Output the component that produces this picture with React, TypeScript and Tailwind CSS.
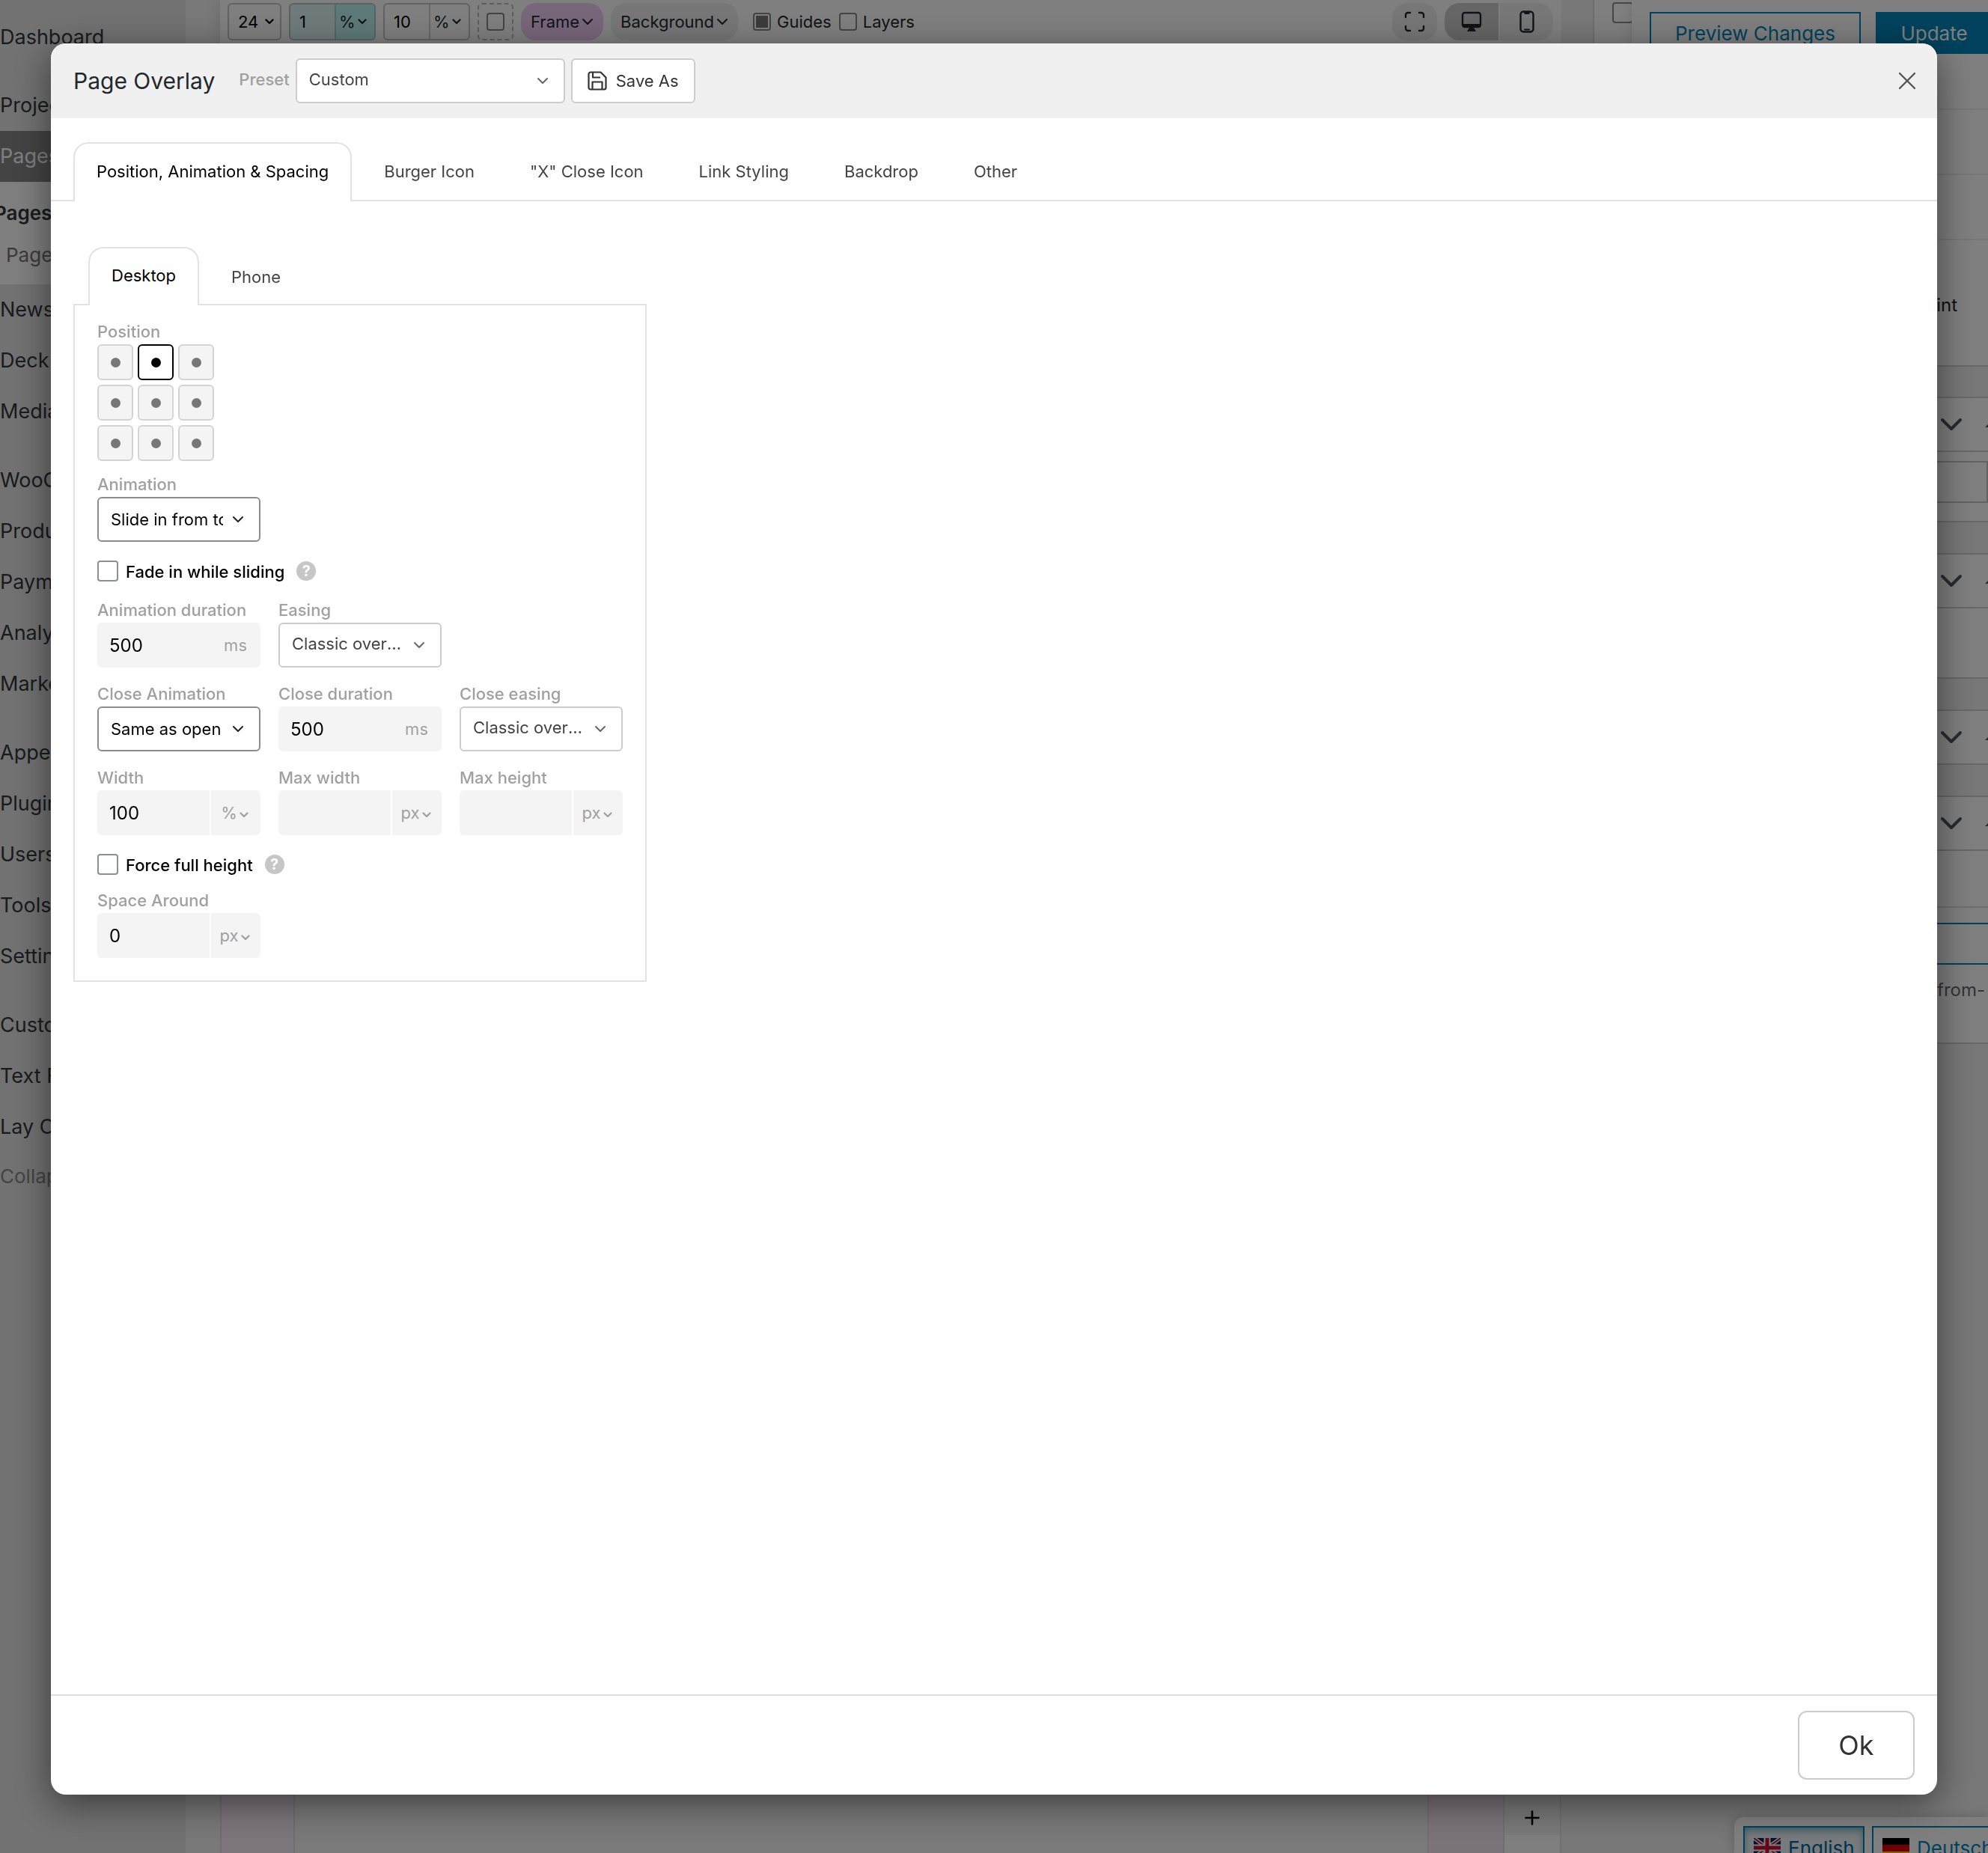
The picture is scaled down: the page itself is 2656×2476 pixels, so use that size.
import { useState } from 'react';

const menuGroups = [
  ['News', 'Deck', 'Media'],
  ['WooCommerce', 'Products', 'Payments', 'Analytics', 'Marketing'],
  ['Appearance', 'Plugins', 'Users', 'Tools', 'Settings'],
  ['Customize', 'Text Formats', 'Lay Options'],
];

const tabs = ['Position, Animation & Spacing', 'Burger Icon', '"X" Close Icon', 'Link Styling', 'Backdrop', 'Other'];

const positions = [
  'Top left', 'Top center', 'Top right',
  'Center left', 'Center', 'Center right',
  'Bottom left', 'Bottom center', 'Bottom right',
];

const Chevron = ({ className = '', stroke = 2 }: { className?: string; stroke?: number }) => (
  <svg viewBox="0 0 16 10" fill="none" stroke="currentColor" strokeWidth={stroke} strokeLinecap="round" strokeLinejoin="round" className={`shrink-0 pointer-events-none ${className}`}>
    <path d="M2 2l6 6 6-6" />
  </svg>
);

const Sidebar = () => (
  <aside className="w-[248px] shrink-0 overflow-hidden bg-[#e4e4e4] pt-4 text-[27px] text-[#32373c]">
    <nav className="flex flex-col gap-6">
      <a href="#dashboard" className="flex h-[68px] items-center">Dashboard</a>
      <div>
        <a href="#projects" className="flex h-[67px] items-center">Projects</a>
        <a href="#pages" className="flex h-[68px] items-center bg-[#888888] text-white">Pages</a>
        <div className="bg-white pt-[13px] pb-3 text-[26px]">
          <a href="#all-pages" className="-ml-2 flex h-14 items-center font-semibold">Pages</a>
          <a href="#page" className="flex h-14 items-center pl-2 text-[#777777]">Page</a>
        </div>
        {menuGroups[0].map((item) => (
          <a key={item} href="#menu" className="flex h-[68px] items-center">{item}</a>
        ))}
      </div>
      {menuGroups.slice(1).map((group) => (
        <div key={group[0]}>
          {group.map((item) => (
            <a key={item} href="#menu" className="flex h-[68px] items-center whitespace-nowrap">{item}</a>
          ))}
          {group[0] === 'Customize' && (
            <button type="button" className="flex h-[62px] items-center text-[26px] text-[#888888]">Collapse menu</button>
          )}
        </div>
      ))}
    </nav>
  </aside>
);

const Toolbar = () => (
  <div className="flex h-[62px] items-start gap-[10px] bg-white pt-1 pr-[11px] pl-[10px] text-[22px] text-[#23282d] shadow-[0_0_20px_rgba(0,0,0,0.12)]">
    <button type="button" className="flex h-[50px] w-[72px] items-center justify-between rounded-md border-2 border-[#c4c4c4] pr-2 pl-3 text-black">
      24 <Chevron className="w-[12px]" stroke={3} />
    </button>
    <div className="flex h-[50px] w-[116px] overflow-hidden rounded-md border-2 border-[#b4c4c4] bg-[#dff7f7]">
      <input aria-label="Columns gutter" defaultValue="1" className="w-[59px] pl-3 text-black" />
      <button type="button" className="flex flex-1 items-center justify-between border-l-2 border-[#a8cccc] bg-[#bdf3f2] pr-[10px] pl-1">
        % <Chevron className="w-[12px]" stroke={3} />
      </button>
    </div>
    <div className="flex h-[50px] w-[116px] overflow-hidden rounded-md border-2 border-[#c4c4c4]">
      <input aria-label="Row gutter" defaultValue="10" className="w-[59px] pl-3 text-black" />
      <button type="button" className="flex flex-1 items-center justify-between border-l-2 border-[#d0d0d0] pr-[10px] pl-1">
        % <Chevron className="w-[12px]" stroke={3} />
      </button>
    </div>
    <button type="button" aria-label="Outline" className="flex h-[50px] w-12 items-center justify-center rounded-md border-2 border-dashed border-[#bbbbbb]">
      <span className="size-6 rounded border-2 border-[#888888]" />
    </button>
    <button type="button" className="flex h-[50px] items-center gap-[3px] rounded-[20px] bg-[#f0ccf5] px-[13px]">
      Frame <Chevron className="w-4" />
    </button>
    <button type="button" className="flex h-[50px] items-center gap-[3px] rounded-[20px] bg-[#eeeeee] px-[13px]">
      Background <Chevron className="w-4" />
    </button>
    <label className="ml-[10px] flex h-[50px] items-center gap-2">
      <input type="checkbox" defaultChecked className="size-6 appearance-none rounded border-2 border-[#888888] bg-white p-[2px] before:block before:size-full before:bg-[#777777] before:content-['']" />
      Guides
    </label>
    <label className="flex h-[50px] items-center gap-2">
      <input type="checkbox" className="size-6 appearance-none rounded border-2 border-[#888888] bg-white" />
      Layers
    </label>
    <button type="button" aria-label="Fullscreen" className="ml-auto flex h-[50px] w-[60px] items-center justify-center rounded-[20px] bg-[#eeeeee]">
      <svg viewBox="0 0 28 28" fill="none" stroke="currentColor" strokeWidth="2.4" strokeLinecap="round" className="w-7">
        <path d="M2 8V5a3 3 0 0 1 3-3h3M20 2h3a3 3 0 0 1 3 3v3M26 20v3a3 3 0 0 1-3 3h-3M8 26H5a3 3 0 0 1-3-3v-3" />
      </svg>
    </button>
    <div className="flex h-[50px] gap-[2px] overflow-hidden rounded-[20px]">
      <button type="button" aria-label="Desktop view" className="flex w-[72px] items-center justify-center bg-[#cccccc]">
        <svg viewBox="0 0 28 28" className="w-7">
          <rect x="2" y="2" width="24" height="19" rx="3" fill="none" stroke="currentColor" strokeWidth="2.4" />
          <path d="M2 17h24v2a3 3 0 0 1-3 3h-6l3 5H8l3-5H5a3 3 0 0 1-3-3z" fill="currentColor" />
        </svg>
      </button>
      <button type="button" aria-label="Phone view" className="flex w-[71px] items-center justify-center bg-[#eeeeee]">
        <svg viewBox="0 0 20 30" className="w-5">
          <rect x="1.5" y="1.5" width="17" height="27" rx="4" fill="none" stroke="currentColor" strokeWidth="2.4" />
          <path d="M6 2h8v1a2 2 0 0 1-2 2H8a2 2 0 0 1-2-2z" fill="currentColor" />
          <path d="M7 25.5h6" stroke="currentColor" strokeWidth="2" strokeLinecap="round" />
        </svg>
      </button>
    </div>
  </div>
);

const Canvas = () => (
  <main className="flex min-w-0 flex-1 flex-col bg-[#f2f2f2] pl-[46px]">
    <Toolbar />
    <div className="flex flex-1 bg-[#f4f4f4]">
      <div className="w-[100px] border-x-2 border-[#e8d8e8] bg-[#fdecfa]" />
      <div className="flex-1" />
      <div className="w-[101px] border-l-2 border-[#f0d8f0] bg-[#f8e8f6]" />
      <div className="flex w-[78px] flex-col justify-end border-x-2 border-[#e0e0e0]">
        <button type="button" aria-label="Add row" className="flex h-[46px] items-center justify-center text-black">
          <svg viewBox="0 0 20 20" stroke="currentColor" strokeWidth="2.6" strokeLinecap="round" className="w-5">
            <path d="M10 1.500v17M1.500 10h17" />
          </svg>
        </button>
        <div className="h-6 bg-white" />
      </div>
    </div>
  </main>
);

const BoxHeader = () => (
  <div className="flex h-[74px] items-center justify-end gap-[29px] border-y-2 border-[#ccd0d4] bg-white text-[#50575e]">
    <Chevron className="w-[32px]" />
    <svg viewBox="0 0 20 12" className="-mr-4 w-5" fill="currentColor"><path d="M0 10 10 0l10 10z" /></svg>
  </div>
);

const Inspector = () => (
  <aside className="flex w-[570px] shrink-0 flex-col overflow-hidden bg-[#f0f0f0] text-[26px]">
    <div className="flex h-[96px] shrink-0 pl-[42px]">
      <div className="flex-1 overflow-hidden border-l-2 border-[#dcdcdc] bg-white pt-[2px] pl-6">
        <input type="checkbox" aria-label="Show grid" className="size-7 appearance-none rounded border-2 border-[#8c8f94]" />
      </div>
      <div className="flex w-[476px] shrink-0 gap-5 bg-white pt-4 pl-6 shadow-[0_4px_16px_rgba(0,0,0,0.15)]">
        <button type="button" className="h-14 w-[282px] shrink-0 border-2 border-[#0085ba] whitespace-nowrap text-[#0085ba]">Preview Changes</button>
        <button type="button" className="h-14 w-[160px] shrink-0 bg-[#0085ba] pr-1 text-white">Update</button>
      </div>
    </div>
    <div className="ml-[42px] flex h-[394px] shrink-0 flex-col border-b-2 border-[#ccd0d4] bg-white">
      <div className="h-[51px] border-b-2 border-[#eeeeee]" />
      <div className="h-[87px] border-b-2 border-[#eeeeee]" />
      <div className="h-[87px] border-b-2 border-[#eeeeee]" />
      <p className="flex flex-1 items-center justify-end pt-[6px] pr-[41px] text-[24px] text-[#1d2327]">Breakpoint</p>
    </div>
    <section className="mt-[40px] ml-[42px] shrink-0">
      <BoxHeader />
      <div className="h-[94px] border-b-2 border-[#ccd0d4] bg-white pt-3">
        <div className="h-14 border-2 border-[#c3c4c7]" />
      </div>
    </section>
    <section className="mt-[41px] ml-[42px] shrink-0">
      <BoxHeader />
      <div className="h-[94px] border-b-2 border-[#ccd0d4] bg-white" />
    </section>
    <section className="mt-[41px] ml-[42px] shrink-0">
      <BoxHeader />
    </section>
    <section className="mt-[41px] ml-[42px] shrink-0">
      <BoxHeader />
      <div className="border-b-2 border-[#ccd0d4] bg-white">
        <div className="h-[76px] border-b-2 border-[#dddddd]" />
        <input aria-label="Slug" className="mt-5 block h-14 w-full border-2 border-r-0 border-[#0085ba] bg-white" />
        <p className="flex h-[104px] items-start justify-end pt-4 pr-1 text-[24px] text-[#646970]">from-</p>
      </div>
    </section>
    <div className="mt-auto flex h-12 shrink-0 gap-[10px] self-end overflow-hidden rounded-tl-xl bg-white pt-3 pl-3 text-[#0085ba] shadow-[0_0_16px_rgba(0,0,0,0.2)]">
      <button type="button" className="flex h-[58px] w-[162px] shrink-0 items-center gap-[10px] border-2 border-[#0085ba] bg-[#eef6fa] pl-3 text-[#006799] shadow-[inset_0_4px_10px_#7fb8cc]">
        <svg viewBox="0 0 36 26" className="w-9">
          <path fill="#012169" d="M0 0h36v26H0z" />
          <path stroke="#fff" strokeWidth="5" d="M0 0l36 26M36 0L0 26" />
          <path stroke="#c8102e" strokeWidth="2" d="M0 0l36 26M36 0L0 26" />
          <path stroke="#fff" strokeWidth="9" d="M18 0v26M0 13h36" />
          <path stroke="#c8102e" strokeWidth="5" d="M18 0v26M0 13h36" />
        </svg>
        English
      </button>
      <button type="button" className="-mr-4 flex h-[58px] w-[171px] shrink-0 items-center gap-[10px] border-2 border-[#0085ba] bg-white pl-3">
        <svg viewBox="0 0 36 26" className="w-9">
          <path fill="#000" d="M0 0h36v9H0z" />
          <path fill="#d00" d="M0 9h36v9H0z" />
          <path fill="#ffce00" d="M0 18h36v8H0z" />
        </svg>
        Deutsch
      </button>
    </div>
  </aside>
);

const Field = ({ id, label, children }: { id: string; label: string; children: React.ReactNode }) => (
  <div className="w-[218px]">
    <label htmlFor={id} className="block leading-[34px] font-medium whitespace-nowrap text-[#a0a0a0]">{label}</label>
    {children}
  </div>
);

const Select = ({ id, value, strong = false }: { id: string; value: string; strong?: boolean }) => (
  <div className="relative">
    <select
      id={id}
      defaultValue={value}
      className={`block h-[60px] w-full appearance-none overflow-hidden rounded-md border-2 bg-white pr-12 pl-4
        ${strong ? 'border-[#8c8c8c] text-black' : 'border-[#cccccc] pb-[3px] text-[#444444] text-ellipsis'}`}
    >
      <option>{value}</option>
    </select>
    <Chevron className={`absolute top-[25px] right-[22px] w-4 ${strong ? 'text-[#222222]' : 'text-[#666666]'}`} />
  </div>
);

const DurationInput = ({ id }: { id: string }) => (
  <div className="flex h-[60px] items-center rounded-md bg-[#f4f4f4] pt-px pr-[18px] pl-4">
    <input id={id} defaultValue="500" className="w-full min-w-0 text-[24px] text-black" />
    <span className="text-[#a0a0a0]">ms</span>
  </div>
);

const UnitInput = ({ id, value, unit }: { id: string; value: string; unit: string }) => (
  <div className="flex h-[60px] gap-[2px] overflow-hidden rounded-md text-[#a0a0a0]">
    <input id={id} defaultValue={value} className="w-[150px] bg-[#f4f4f4] pt-px pl-4 text-[24px] text-black" />
    <button type="button" className="flex flex-1 items-center justify-center gap-[3px] bg-[#f4f4f4] pt-px pr-[3px]">
      {unit} <Chevron className="mt-1 w-3" stroke={3} />
    </button>
  </div>
);

const CheckRow = ({ label }: { label: string }) => (
  <div className="flex h-7 items-center">
    <label className="flex items-center gap-[10px] font-medium text-black">
      <input type="checkbox" className="size-7 appearance-none rounded border-2 border-[#8c8f94] bg-white" />
      <span className="pt-[2px]">{label}</span>
    </label>
    <button type="button" aria-label="Help" className="ml-4 flex size-[26px] items-center justify-center rounded-full bg-[#c6c6c6] text-[20px] font-bold text-white">?</button>
  </div>
);

const App = () => {
  const [tab, setTab] = useState(tabs[0]);
  const [device, setDevice] = useState('Desktop');
  const [position, setPosition] = useState('Top center');

  return (
    <div className="relative h-screen overflow-hidden font-[Inter,sans-serif] text-[22px]">
      <div className="flex h-full">
        <Sidebar />
        <Canvas />
        <Inspector />
      </div>

      <div className="fixed inset-0 flex bg-black/50 px-[68px] pt-[58px] pb-[78px]">
        <div role="dialog" aria-label="Page Overlay" className="flex flex-1 flex-col overflow-hidden rounded-[20px] bg-white shadow-[0_12px_50px_rgba(0,0,0,0.5)]">
          {/* Header */}
          <header className="flex h-[100px] shrink-0 items-center bg-[#f0f0f0] pr-[29px] pl-[30px]">
            <h1 className="text-[30px] text-[#23282d]">Page Overlay</h1>
            <label htmlFor="preset" className="mr-2 ml-8 pb-1 font-medium text-[#a0a0a0]">Preset</label>
            <div className="w-[360px]">
              <Select id="preset" value="Custom" />
            </div>
            <button type="button" className="ml-2 flex h-[60px] items-center gap-3 rounded-md border-2 border-[#cccccc] bg-white px-5 text-[#333333]">
              <svg viewBox="0 0 26 26" fill="none" stroke="currentColor" strokeWidth="2.2" strokeLinejoin="round" className="w-[26px]">
                <path d="M4 1.500h13.500l7 7V22a2.500 2.500 0 0 1-2.500 2.500H4A2.500 2.500 0 0 1 1.500 22V4A2.500 2.500 0 0 1 4 1.500z" />
                <path d="M7 1.500v7h10M6.500 24.500V14.500h13v10" />
              </svg>
              Save As
            </button>
            <button type="button" aria-label="Close" className="ml-auto text-[#555555]">
              <svg viewBox="0 0 22 22" stroke="currentColor" strokeWidth="2.4" strokeLinecap="round" className="w-[22px]">
                <path d="M1 1l20 20M21 1L1 21" />
              </svg>
            </button>
          </header>

          {/* Tabs */}
          <div role="tablist" className="mt-8 flex h-[79px] shrink-0 gap-3 border-b-2 border-[#e2e2e2] px-[30px]">
            {tabs.map((name) => (
              <button
                key={name}
                type="button"
                role="tab"
                aria-selected={tab === name}
                onClick={() => setTab(name)}
                className={`-mb-[2px] rounded-t-[20px] border-2 border-b-0 px-[29px] pb-[3px] ${tab === name ? 'border-[#e2e2e2] bg-white text-black' : 'border-transparent text-[#444444]'}`}
              >
                {name}
              </button>
            ))}
          </div>

          {/* Settings */}
          <div className="flex-1 px-[30px] pt-[61px]">
            <div role="tablist" className="flex h-[76px] gap-3 pl-5">
              {['Desktop', 'Phone'].map((name) => (
                <button
                  key={name}
                  type="button"
                  role="tab"
                  aria-selected={device === name}
                  onClick={() => setDevice(name)}
                  className={`relative -mb-[2px] rounded-t-[20px] border-2 border-b-0 px-[29px] ${device === name ? 'border-[#e2e2e2] bg-white pb-[3px] text-black' : 'border-transparent text-[#444444]'}`}
                >
                  {name}
                </button>
              ))}
            </div>
            <div className="w-fit border-2 border-[#e2e2e2] px-[30px] pt-[18px] pb-[30px]">
              <fieldset>
                <legend className="leading-[34px] font-medium text-[#a0a0a0]">Position</legend>
                <div className="grid w-fit grid-cols-3 gap-[6px]">
                  {positions.map((name) => (
                    <button
                      key={name}
                      type="button"
                      aria-label={name}
                      onClick={() => setPosition(name)}
                      className={`flex size-12 items-center justify-center rounded-md border-2 ${position === name ? 'border-black bg-white text-black' : 'border-[#d4d4d4] bg-[#f4f4f4] text-[#777777]'}`}
                    >
                      <span className="size-[13px] rounded-full bg-current" />
                    </button>
                  ))}
                </div>
              </fieldset>
              <div className="mt-[14px] mb-[25px]">
                <Field id="animation" label="Animation"><Select id="animation" value="Slide in from top" strong /></Field>
              </div>
              <CheckRow label="Fade in while sliding" />
              <div className="mt-[21px] mb-[25px] grid grid-cols-3 gap-x-6 gap-y-[18px]">
                <Field id="duration" label="Animation duration"><DurationInput id="duration" /></Field>
                <Field id="easing" label="Easing"><Select id="easing" value="Classic overshoot" /></Field>
                <div />
                <Field id="close-animation" label="Close Animation"><Select id="close-animation" value="Same as open" strong /></Field>
                <Field id="close-duration" label="Close duration"><DurationInput id="close-duration" /></Field>
                <Field id="close-easing" label="Close easing"><Select id="close-easing" value="Classic overshoot" /></Field>
                <Field id="width" label="Width"><UnitInput id="width" value="100" unit="%" /></Field>
                <Field id="max-width" label="Max width"><UnitInput id="max-width" value="" unit="px" /></Field>
                <Field id="max-height" label="Max height"><UnitInput id="max-height" value="" unit="px" /></Field>
              </div>
              <CheckRow label="Force full height" />
              <div className="mt-[17px]">
                <Field id="space" label="Space Around"><UnitInput id="space" value="0" unit="px" /></Field>
              </div>
            </div>
          </div>

          {/* Footer */}
          <footer className="flex h-[134px] shrink-0 items-center justify-end border-t-2 border-[#dddddd] px-[30px]">
            <button type="button" className="h-[92px] w-[156px] rounded-xl border-2 border-[#cccccc] text-[36px] text-[#333333]">Ok</button>
          </footer>
        </div>
      </div>
    </div>
  );
};

export default App;
